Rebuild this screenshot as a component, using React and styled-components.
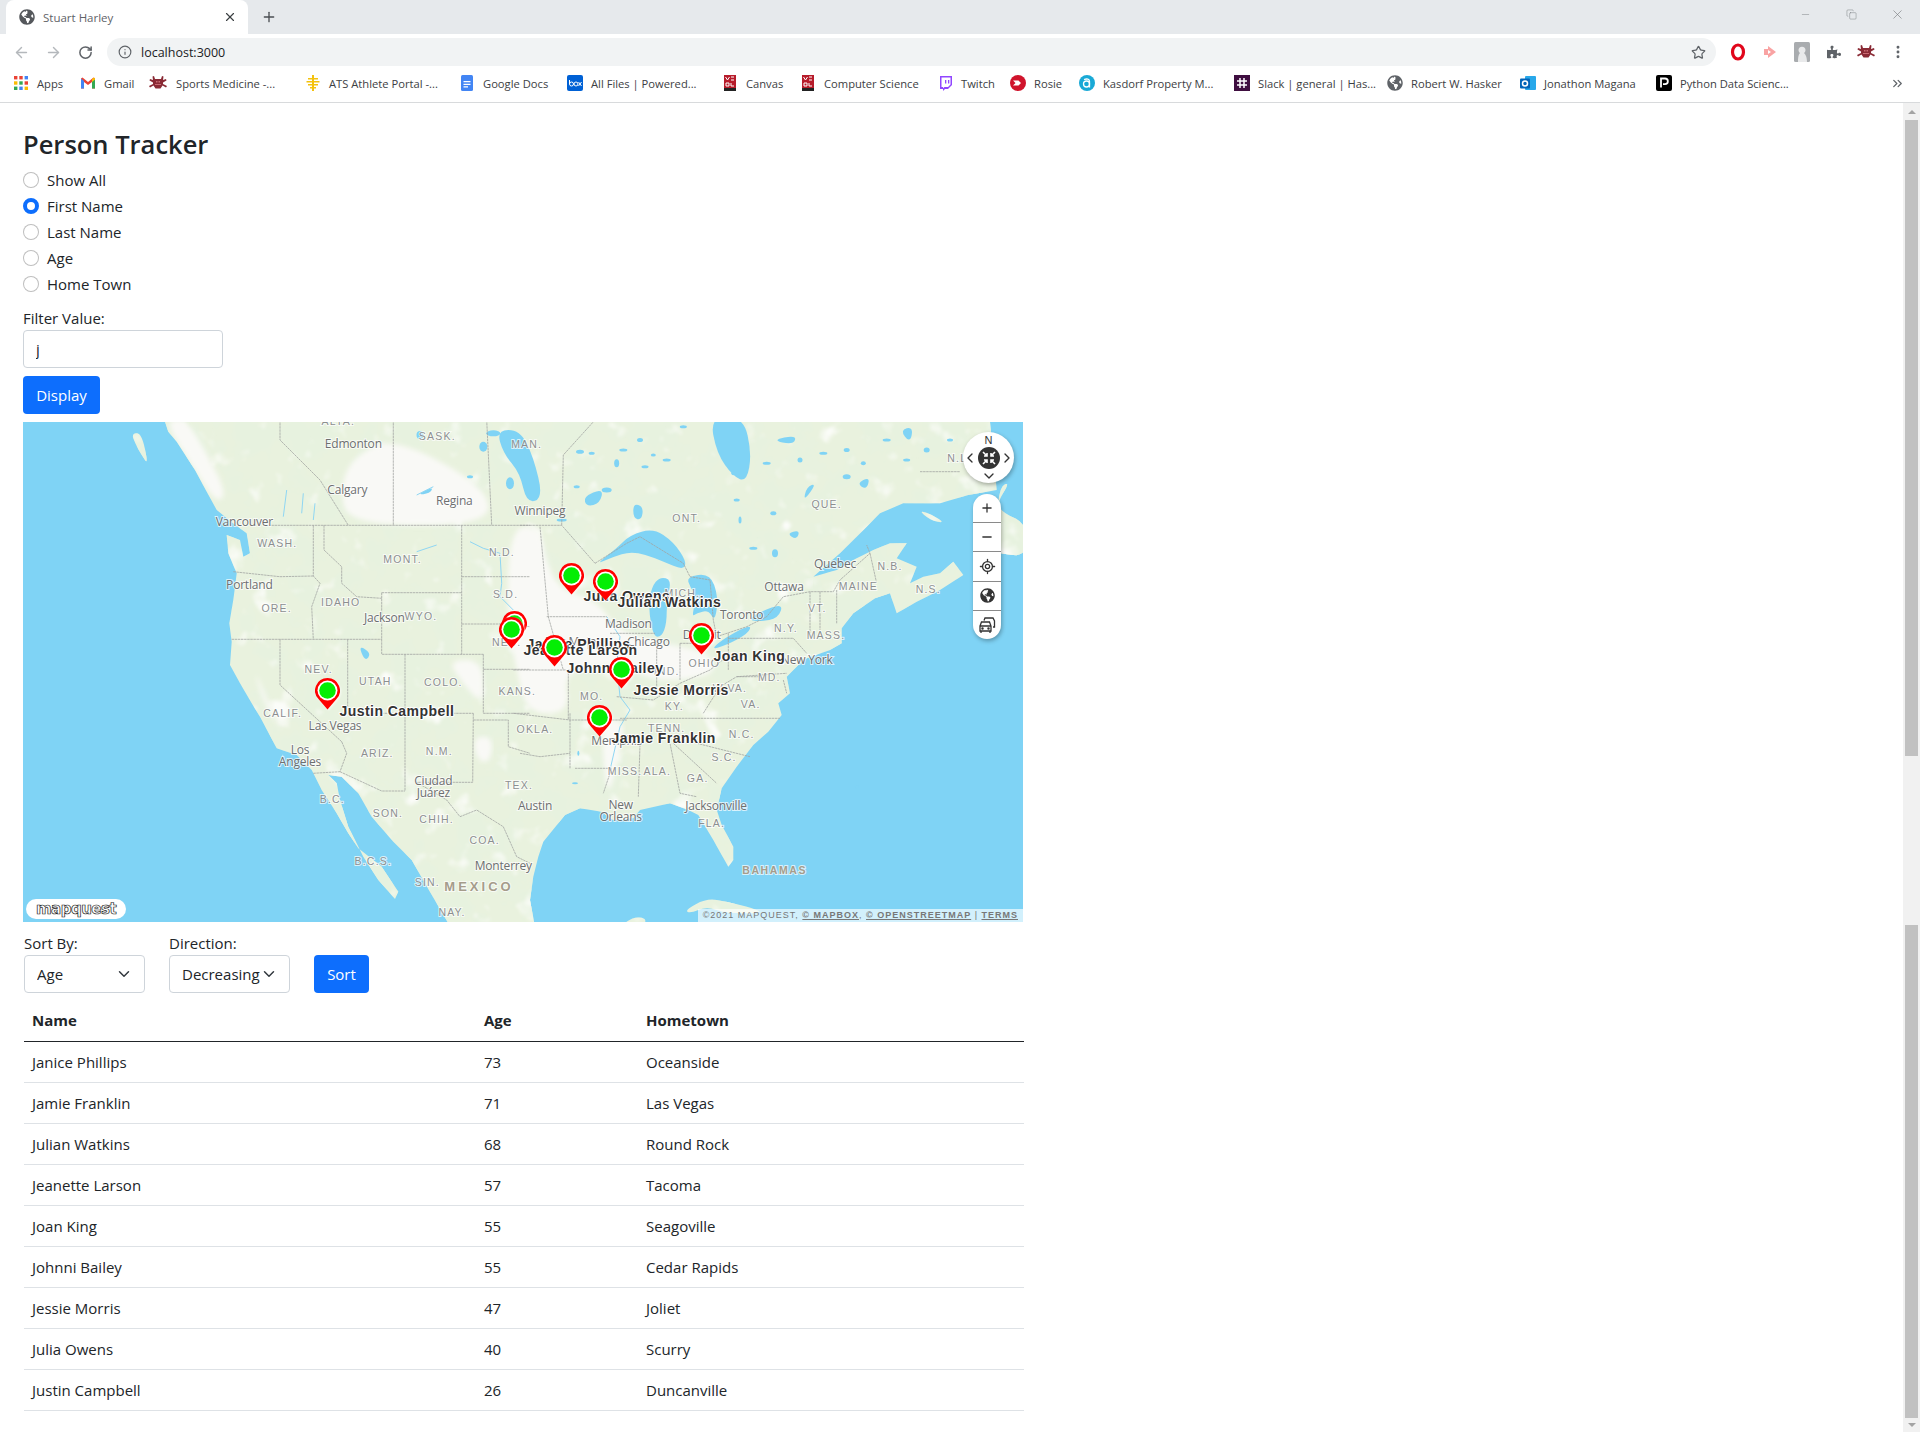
import React from 'react'
import styled, { createGlobalStyle } from 'styled-components'
import { ArrowLeft, ArrowRight, RotateCw, Info, Star, X, Plus, Minus, Copy, ChevronsRight, EllipsisVertical, ChevronLeft, ChevronRight, ChevronDown, LocateFixed } from 'lucide-react'
import { FaGlobeAmericas, FaPuzzlePiece } from 'react-icons/fa'

const UI_FONT = `"Open Sans", "Noto Sans", "Liberation Sans", sans-serif`

const GlobalStyle = createGlobalStyle`
  html, body { margin: 0; padding: 0; height: 1432px; overflow: hidden; background: #fff; }
  body { font-family: ${UI_FONT}; color: #212529; }
  * { box-sizing: border-box; }
`

const Shell = styled.div`
  width: 1920px;
  height: 1432px;
  display: flex;
  flex-direction: column;
  overflow: hidden;
`

/* browser chrome */
const TabStrip = styled.div`
  height: 34px;
  background: #e6e9ec;
  display: flex;
  align-items: flex-end;
  padding-left: 6px;
`
const Tab = styled.div`
  width: 242px;
  height: 34px;
  background: #fff;
  border-radius: 8px 8px 0 0;
  display: flex;
  align-items: center;
  padding-left: 13px;
  color: #5f6368;
  font-size: 11.5px;
`
const TabTitle = styled.span`
  margin-left: 8px;
  flex: 1;
`
const TabClose = styled.span`
  width: 16px;
  margin-right: 9px;
  display: flex;
  color: #3c4043;
`
const NewTab = styled.span`
  margin: 0 auto 9px 13px;
  display: flex;
  color: #4a4d51;
`
const WindowButton = styled.span`
  width: 46px;
  height: 34px;
  display: flex;
  align-items: center;
  justify-content: center;
  color: #75787c;
  padding-bottom: 6px;
`
const Toolbar = styled.div`
  height: 32px;
  background: #fff;
  display: flex;
  align-items: flex-end;
  padding-left: 5px;
`
const NavButton = styled.span`
  width: 32px;
  height: 28px;
  display: flex;
  align-items: center;
  justify-content: center;
  color: ${p => p.$color || '#5f6368'};
`
const Omnibox = styled.div`
  width: 1609px;
  height: 28px;
  margin: 0 6px;
  border-radius: 14px;
  background: #f1f3f4;
  display: flex;
  align-items: center;
  padding: 0 10px 0 11px;
  color: #5f6368;
`
const Address = styled.span`
  margin-left: 9px;
  flex: 1;
  font-size: 12.5px;
  color: #202124;
`
const BookmarkBar = styled.div`
  height: 37px;
  background: #fff;
  border-bottom: 1px solid #d8dadc;
  display: flex;
  align-items: center;
  padding: 0 0 2px 13px;
  position: relative;
`
const Bookmark = styled.div`
  width: ${p => p.$w}px;
  display: flex;
  align-items: center;
  gap: 8px;
  font-size: 11.2px;
  color: #3c4043;
  white-space: nowrap;
`
const MoreBookmarks = styled.span`
  position: absolute;
  right: 15px;
  top: 10px;
  display: flex;
  color: #5f6368;
`

/* page */
const Viewport = styled.div`
  flex: 1;
  display: flex;
  min-height: 0;
`
const Page = styled.main`
  flex: 1;
  padding: 24px 0 0 23px;
  line-height: 24px;
  font-size: 15px;
`
const Title = styled.h3`
  margin: 0 0 7px;
  font-size: 25.5px;
  line-height: 34px;
  font-weight: 600;
`
const RadioRow = styled.label`
  display: flex;
  align-items: center;
  gap: 8px;
  height: 24px;
  margin-bottom: 2px;
`
const RadioInput = styled.input`
  appearance: none;
  width: 16px;
  height: 16px;
  margin: 0;
  border-radius: 50%;
  background: #fff;
  border: 1px solid rgba(0, 0, 0, 0.25);
  &:checked {
    border: 4px solid #0d6efd;
  }
`
const FilterGroup = styled.div`
  margin-top: 10px;
  display: flex;
  flex-direction: column;
  align-items: flex-start;
`
const TextField = styled.input`
  width: 200px;
  height: 38px;
  padding: 6px 12px;
  border: 1px solid #ced4da;
  border-radius: 4px;
  color: #212529;
  font: 15px ${UI_FONT};
  outline: none;
`
const PrimaryButton = styled.button`
  height: 38px;
  width: ${p => p.$w}px;
  margin-top: ${p => p.$top || 0}px;
  border: 0;
  border-radius: 4px;
  background: #0d6efd;
  color: #fff;
  font: 15px ${UI_FONT};
  padding: 0;
`

const MapFrame = styled.section`
  position: relative;
  width: 1000px;
  height: 500px;
  margin-top: 8px;
  overflow: hidden;
  background: #7fd3f5;
`
const MapArt = styled.svg`
  display: block;
  width: 1000px;
  height: 500px;
`
const placeStyles = {
  city: { size: 12, spacing: -0.2, fill: '#6d6f70' },
  state: { size: 10.5, spacing: 1.2, fill: '#8c8f90' },
  country: { size: 13, spacing: 3, fill: '#a59c8b' },
  sea: { size: 10.5, spacing: 1.6, fill: '#a59c8b' },
}
const PlaceName = styled.text`
  font-family: ${p => (p.$kind === 'city' ? UI_FONT : '"Liberation Sans", sans-serif')};
  font-size: ${p => placeStyles[p.$kind].size}px;
  font-weight: ${p => (p.$kind === 'country' || p.$kind === 'sea' ? 700 : 400)};
  letter-spacing: ${p => placeStyles[p.$kind].spacing}px;
  fill: ${p => placeStyles[p.$kind].fill};
  text-anchor: middle;
  dominant-baseline: central;
  stroke: rgba(255, 255, 255, 0.7);
  stroke-width: 2px;
  paint-order: stroke;
`
const Pin = styled.div`
  position: absolute;
  left: ${p => p.$x - 12.5}px;
  top: ${p => p.$y - 12.5}px;
  width: 25px;
  height: 32px;
`
const PinArt = styled.svg`
  display: block;
  width: 25px;
  height: 32px;
  filter: drop-shadow(1px 1px 1px rgba(255, 255, 255, 0.7));
`
const PinLabel = styled.span`
  position: absolute;
  left: 25px;
  top: 24px;
  white-space: nowrap;
  font: bold 14px/18px "Liberation Sans", Arial, sans-serif;
  letter-spacing: 0.45px;
  color: #333;
  text-shadow: 1px 0 0 #fff, -1px 0 0 #fff, 0 1px 0 #fff, 0 -1px 0 #fff, 1px 1px 1px #fff, -1px -1px 1px #fff;
`
const Compass = styled.div`
  position: absolute;
  left: 940px;
  top: 10px;
  width: 51px;
  height: 51px;
  border-radius: 50%;
  background: #fff;
  box-shadow: 1px 2px 4px rgba(0, 0, 0, 0.3);
  display: grid;
  grid-template-columns: 14px 23px 14px;
  grid-template-rows: 14px 23px 14px;
  place-items: center;
  color: #333;
`
const CompassCell = styled.span`
  grid-column: ${p => p.$col};
  grid-row: ${p => p.$row};
  display: flex;
`
const CompassNorth = styled.span`
  grid-column: 2;
  grid-row: 1;
  font: 11px/12px "Liberation Sans", sans-serif;
  padding-top: 2px;
`
const CompassHub = styled.span`
  grid-column: 2;
  grid-row: 2;
  width: 22px;
  height: 22px;
  border-radius: 50%;
  background: #333;
  display: flex;
  align-items: center;
  justify-content: center;
`
const ZoomStack = styled.div`
  position: absolute;
  left: 950px;
  top: 72px;
  width: 28px;
  height: 145px;
  border-radius: 14px;
  background: #fff;
  box-shadow: 1px 2px 4px rgba(0, 0, 0, 0.3);
  display: flex;
  flex-direction: column;
  overflow: hidden;
  color: #333;
`
const ZoomButton = styled.span`
  flex: 1;
  display: flex;
  align-items: center;
  justify-content: center;
  & + & {
    border-top: 1px solid #8a8a8a;
  }
`
const LogoPill = styled.div`
  position: absolute;
  left: 3px;
  bottom: 3px;
  width: 100px;
  height: 20px;
  border-radius: 10px;
  background: #fff;
  display: flex;
  align-items: center;
  justify-content: center;
`
const LogoText = styled.span`
  font: bold 15px/20px "DejaVu Sans", sans-serif;
  letter-spacing: -0.5px;
  color: #fff;
  -webkit-text-stroke: 0.7px #222;
`
const Attribution = styled.div`
  position: absolute;
  right: 0;
  bottom: 0;
  height: 13px;
  width: 325px;
  padding-right: 5px;
  background: rgba(255, 255, 255, 0.65);
  color: #777;
  font: 9px/13px "Liberation Sans", sans-serif;
  letter-spacing: 1px;
  text-align: right;
  white-space: nowrap;
`
const AttrLink = styled.span`
  font-weight: 700;
  text-decoration: underline;
`

const SortBar = styled.div`
  display: flex;
  align-items: flex-end;
  gap: 24px;
  margin: 9px 0 7px 1px;
`
const SortField = styled.label`
  display: flex;
  flex-direction: column;
`
const Select = styled.select`
  appearance: none;
  width: 121px;
  height: 38px;
  padding: 0 0 0 12px;
  border: 1px solid #ced4da;
  border-radius: 4px;
  color: #212529;
  font: 15px ${UI_FONT};
  background: #fff url("data:image/svg+xml,%3csvg xmlns='http://www.w3.org/2000/svg' viewBox='0 0 16 16'%3e%3cpath fill='none' stroke='%23343a40' stroke-linecap='round' stroke-linejoin='round' stroke-width='2' d='M2 5l6 6 6-6'/%3e%3c/svg%3e") no-repeat right 12px center / 16px 12px;
`
const People = styled.table`
  width: 1000px;
  margin-left: 1px;
  border-collapse: collapse;
  table-layout: fixed;
`
const HeadCell = styled.th`
  width: ${p => p.$w}px;
  height: 41px;
  padding: 8px;
  text-align: left;
  font-weight: 700;
  border-bottom: 1px solid #212529;
`
const Cell = styled.td`
  height: 41px;
  padding: 8px;
  border-bottom: 1px solid #dee2e6;
`

const Scrollbar = styled.aside`
  width: 17px;
  background: #f1f1f1;
  display: flex;
  flex-direction: column;
`
const ScrollArrow = styled.span`
  height: ${p => p.$h}px;
  display: flex;
  align-items: center;
  justify-content: center;
  &::before {
    content: '';
    border-left: 4px solid transparent;
    border-right: 4px solid transparent;
    ${p => (p.$down ? 'border-top' : 'border-bottom')}: 4px solid #a3a3a3;
  }
`
const ScrollThumb = styled.span`
  height: ${p => p.$h}px;
  margin: ${p => (p.$last ? 'auto 2px 0 2px' : '0 2px')};
  background: #c1c1c1;
`

/* small favicons, drawn */
const Ico = styled.svg`
  width: 16px;
  height: 16px;
  flex: none;
`
const BugIco = styled.svg`
  width: 20px;
  height: 16px;
  flex: none;
`
const icons = {
  apps: (
    <Ico viewBox="0 0 16 16">
      {[['#ea4335', '#ea4335', '#4285f4'], ['#fbbc04', '#34a853', '#ea4335'], ['#34a853', '#4285f4', '#fbbc04']].map((row, r) =>
        row.map((c, i) => <rect key={`${r}${i}`} x={1 + i * 5.3} y={1 + r * 5.3} width="3.4" height="3.4" fill={c} />)
      )}
    </Ico>
  ),
  gmail: (
    <Ico viewBox="0 0 16 16">
      <path d="M1 3.500v10h3V7l4 3 4-3v6.500h3v-10l-1.500-1L8 7 2.500 2.500z" fill="#ea4335" />
      <path d="M1 3.500v10h3V6z" fill="#4285f4" />
      <path d="M15 3.500v10h-3V6z" fill="#34a853" />
      <path d="M15 3.500 14 2.500 12 4v3l3-2.500z" fill="#fbbc04" />
    </Ico>
  ),
  bug: (
    <BugIco viewBox="0 0 20 16">
      <path d="M7 4h6l1-3 1.500.500L15 5l3-1 .500 1.500L15 7.500V9l4 2-1 1.500-3.500-2L12.500 13.500h-5L5.500 10.500 2 12.500 1 11l4-2V7.500L1.500 5.500 2 4l3 1-.500-3.500L6 1z" fill="#8a2a35" />
      <path d="M8 6h1.500v1.500H8zM10.500 6H12v1.500h-1.500zM7 9h6v1H7z" fill="#c96a72" />
    </BugIco>
  ),
  ats: (
    <Ico viewBox="0 0 16 16">
      <path d="M7 0h2v16H7zM3 3h10v1.500H3zM1.500 6h13v1.500h-13zM3 9h10v1.500H3zM5 12h6v1.500H5z" fill="#f4c20d" />
    </Ico>
  ),
  docs: (
    <Ico viewBox="0 0 16 16">
      <rect x="2" width="12" height="16" rx="1.500" fill="#4285f4" />
      <path d="M4.500 6h7v1.300h-7zM4.500 8.700h7V10h-7zM4.500 11.300h4.500v1.300H4.500z" fill="#fff" />
    </Ico>
  ),
  box: (
    <Ico viewBox="0 0 16 16">
      <rect width="16" height="16" rx="2" fill="#0061d5" />
      <circle cx="4.500" cy="9" r="2" fill="none" stroke="#fff" />
      <circle cx="9" cy="9" r="2" fill="none" stroke="#fff" />
      <path d="M2.500 5v4M11.500 7l3 4M14.500 7l-3 4" stroke="#fff" fill="none" />
    </Ico>
  ),
  msoe: (
    <Ico viewBox="0 0 16 16">
      <rect x="2" width="12" height="13" fill="#b71c2b" />
      <path d="M3.500 2l2 3 2-3M9 2h3M9 5h3M4 8h3v3H4zM9 8v3h3" stroke="#fff" fill="none" />
      <rect x="2" y="13" width="12" height="3" fill="#222" />
    </Ico>
  ),
  twitch: (
    <Ico viewBox="0 0 16 16">
      <path d="M3 1h12v9l-4 4H8l-2 2v-2H3z" fill="#9146ff" />
      <path d="M4.500 2.500h9v7l-2.500 2.500H7.500l-1.500 1.300V12H4.500z" fill="#fff" />
      <path d="M8 5h1.300v3.500H8zM11 5h1.300v3.500H11z" fill="#9146ff" />
    </Ico>
  ),
  rosie: (
    <Ico viewBox="0 0 16 16">
      <circle cx="8" cy="8" r="8" fill="#d0142c" />
      <path d="M3 5.500h5.500L11 8l-2.500 2.500H3l2.500-2.500z" fill="#fff" />
    </Ico>
  ),
  kasdorf: (
    <Ico viewBox="0 0 16 16">
      <circle cx="8" cy="8" r="8" fill="#19a9d6" />
      <circle cx="7.500" cy="9" r="3" fill="none" stroke="#fff" strokeWidth="1.300" />
      <path d="M5 4.500c3-1 5.500-.5 5.500 2v6" fill="none" stroke="#fff" strokeWidth="1.300" />
    </Ico>
  ),
  slack: (
    <Ico viewBox="0 0 16 16">
      <rect width="16" height="16" fill="#3f0e40" />
      <path d="M6 3v10M10 3v10M3 6h10M3 10h10" stroke="#fff" strokeWidth="1.500" />
    </Ico>
  ),
  outlook: (
    <Ico viewBox="0 0 16 16">
      <rect x="5" y="1" width="11" height="14" rx="1" fill="#28a8ea" />
      <rect y="3.500" width="10" height="10" rx="1" fill="#0364b8" />
      <circle cx="5" cy="8.500" r="2.500" fill="none" stroke="#fff" strokeWidth="1.500" />
    </Ico>
  ),
  python: (
    <Ico viewBox="0 0 16 16">
      <rect width="16" height="16" rx="2" fill="#000" />
      <path d="M5 12.500v-9h4a2.800 2.800 0 0 1 0 5.700H7" fill="none" stroke="#fff" strokeWidth="1.800" />
    </Ico>
  ),
  globe: <FaGlobeAmericas size={16} color="#5f6368" />,
}

const bookmarks = [
  ['apps', 'Apps', 67],
  ['gmail', 'Gmail', 68],
  ['bug', 'Sports Medicine -...', 157],
  ['ats', 'ATS Athlete Portal -...', 154],
  ['docs', 'Google Docs', 108],
  ['box', 'All Files | Powered...', 155],
  ['msoe', 'Canvas', 78],
  ['msoe', 'Computer Science', 137],
  ['twitch', 'Twitch', 73],
  ['rosie', 'Rosie', 69],
  ['kasdorf', 'Kasdorf Property M...', 155],
  ['slack', 'Slack | general | Has...', 153],
  ['globe', 'Robert W. Hasker', 133],
  ['outlook', 'Jonathon Magana', 136],
  ['python', 'Python Data Scienc...', 150],
]

/* map geometry is written in crop coordinates: west half and east half */
const west = pts => pts.map(([x, y]) => [x / 3 - 3, y / 3 - 2])
const east = pts => pts.map(([x, y]) => [x / 3 + 497, y / 3 - 2])
const toPath = (pts, close = true) =>
  'M' + pts.map(([x, y]) => `${x.toFixed(1)} ${y.toFixed(1)}`).join('L') + (close ? 'Z' : '')
// rounded outline through the midpoints, so coasts and lakes don't look cut with scissors
const toBlob = pts => {
  const mid = (a, b) => [(a[0] + b[0]) / 2, (a[1] + b[1]) / 2]
  const start = mid(pts[pts.length - 1], pts[0])
  let d = `M${start[0].toFixed(1)} ${start[1].toFixed(1)}`
  pts.forEach((p, i) => {
    const m = mid(p, pts[(i + 1) % pts.length])
    d += `Q${p[0].toFixed(1)} ${p[1].toFixed(1)} ${m[0].toFixed(1)} ${m[1].toFixed(1)}`
  })
  return d + 'Z'
}

const mainland = [
  ...west([[430, -10], [445, 35], [470, 65], [525, 150], [560, 215], [590, 270], [640, 310], [680, 340], [690, 400], [670, 410], [660, 360], [620, 345], [625, 400], [650, 460], [640, 540], [628, 610], [635, 665], [630, 735], [660, 790], [695, 850], [720, 890], [770, 985], [830, 1005], [875, 1050], [905, 1110], [950, 1180], [985, 1240], [1015, 1285], [1085, 1340], [1135, 1415], [1125, 1437], [1075, 1380], [1030, 1310], [985, 1220], [960, 1140], [950, 1090], [925, 1065], [965, 1070], [1015, 1120], [1055, 1190], [1120, 1265], [1175, 1320], [1215, 1390], [1285, 1510]]),
  ...east([[45, 1520], [30, 1440], [40, 1370], [55, 1310], [70, 1265], [135, 1185], [180, 1165], [245, 1175], [280, 1200], [340, 1195], [360, 1170], [450, 1150], [505, 1170], [535, 1185], [580, 1260], [625, 1340], [640, 1320], [640, 1280], [605, 1215], [590, 1170], [605, 1105], [650, 1040], [700, 975], [745, 935], [785, 885], [775, 850], [810, 820], [800, 770], [840, 730], [860, 715], [930, 690], [965, 670], [965, 625], [1000, 580], [1065, 535], [1110, 520], [1130, 580], [1190, 545], [1260, 510], [1330, 465], [1300, 425], [1260, 460], [1210, 470], [1170, 490], [1190, 440], [1130, 415], [1160, 370], [1110, 370], [1060, 390], [1000, 420], [950, 450], [880, 470], [960, 400], [1010, 350], [1080, 280], [1150, 250], [1260, 250], [1345, 225], [1430, 210], [1410, 5], [1410, -30]]),
  ...west([[430, -30]]),
]
const islands = [
  west([[335, 40], [365, 40], [385, 135], [365, 105], [345, 70]]),
  east([[1470, 186], [1430, 250], [1450, 280], [1520, 310], [1520, 410], [1440, 400], [1390, 390], [1360, 380], [1430, 290], [1440, 200]]),
  east([[1195, 270], [1240, 285], [1275, 310], [1230, 300]]),
  east([[495, 1470], [560, 1435], [620, 1445], [700, 1465], [730, 1480], [620, 1480], [560, 1460], [510, 1480]]),
  east([[300, 1520], [340, 1490], [380, 1495], [370, 1520]]),
]
const lakes = [
  east([[225, 435], [290, 385], [330, 345], [400, 325], [460, 365], [500, 425], [490, 450], [430, 425], [380, 405], [330, 395], [280, 410]]),
  east([[400, 650], [385, 560], [395, 500], [420, 470], [455, 480], [440, 540], [440, 610], [425, 650]]),
  east([[500, 470], [570, 460], [595, 530], [585, 605], [565, 570], [530, 580], [515, 590], [530, 530], [510, 500]]),
  east([[570, 690], [620, 650], [695, 612], [685, 640], [620, 675]]),
  east([[685, 600], [720, 575], [790, 550], [775, 595], [720, 605]]),
  east([[570, -10], [670, -10], [695, 100], [680, 185], [640, 170], [590, 100]]),
  east([[-70, 30], [0, 30], [40, 110], [70, 235], [20, 250], [0, 160], [-50, 100]]),
  east([[190, 230], [250, 205], [240, 250], [200, 260]]),
  east([[340, 250], [370, 260], [365, 300], [340, 295]]),
  east([[850, 245], [890, 190], [860, 200]]),
  east([[800, 340], [840, 330], [830, 360]]),
  east([[1010, 190], [1050, 170], [1040, 210]]),
  east([[755, 60], [830, 45], [820, 75]]),
  east([[1140, 30], [1180, 20], [1170, 70]]),
  west([[1015, 675], [1055, 700], [1035, 725]]),
  west([[1190, 225], [1240, 200], [1230, 220]]),
]
// [x, y, rx, ry] small lakes, all in the east crop's coordinates
const ponds = [
  [180, 95, 8, 4], [215, 100, 6, 3], [260, 210, 10, 5], [290, 130, 5, 8], [310, 90, 8, 3], [375, 140, 7, 3], [440, 120, 8, 3],
  [400, 105, 5, 3], [740, 130, 8, 3], [760, 280, 6, 4], [765, 400, 6, 8], [700, 385, 8, 3], [980, 170, 8, 5], [1030, 130, 5, 4],
  [980, 90, 6, 4], [910, 100, 8, 3], [650, 240, 6, 3], [640, 160, 4, 4], [660, 300, 3, 7], [170, 200, 6, 3], [125, 300, 10, 3],
  [1160, 120, 7, 3], [1220, 90, 6, 5], [1100, 60, 8, 3], [1290, 60, 6, 3], [490, 20, 7, 3], [360, 60, 6, 4], [840, 120, 5, 5],
  [-30, 190, 8, 12], [-80, 40, 14, 6], [-110, 80, 8, 10], [-300, 45, 7, 8], [-150, 170, 6, 3],
  [1010, 1100, 4, 3], [175, 1000, 2, 5], [165, 1090, 6, 2],
]
const lightAreas = [
  east([[-30, 320], [60, 320], [80, 430], [120, 510], [230, 540], [300, 640], [480, 680], [570, 700], [590, 760], [480, 780], [400, 780], [290, 730], [130, 750], [150, 880], [20, 880], [-10, 750], [-40, 600]]),
  east([[245, 900], [320, 900], [290, 1040], [265, 1130], [250, 1030]]),
  east([[850, 490], [880, 470], [870, 510]]),
  west([[1000, 110], [1120, 50], [1400, 200], [1410, 316], [985, 316], [960, 200]]),
  west([[430, 0], [500, 0], [560, 100], [620, 220], [590, 250], [525, 150]]),
  west([[700, 740], [730, 850], [800, 950], [750, 860]]),
  west([[1285, 720], [1390, 720], [1390, 860], [1320, 780]]),
  west([[1360, 950], [1420, 950], [1410, 1030], [1370, 1020]]),
]
const rivers = [
  east([[260, 590], [300, 650], [290, 730], [300, 830], [330, 870], [300, 920], [270, 1050]]),
  west([[1350, 365], [1390, 385], [1440, 400], [1445, 490], [1440, 530], [1480, 570]]),
  west([[1190, 395], [1250, 375]]),
  west([[850, 220], [845, 280]]),
  west([[800, 210], [790, 290]]),
  west([[885, 250], [880, 300]]),
  west([[1190, 225], [1240, 200]]),
]
const borders = [
  west([[745, 316], [1530, 316]]), east([[0, 316], [125, 316], [225, 430]]),
  west([[780, 0], [780, 60], [900, 180], [975, 300], [985, 316]]), west([[1120, 0], [1120, 316]]), west([[1400, 0], [1415, 316]]),
  east([[225, 0], [130, 105], [125, 316]]),
  east([[225, 430], [320, 370], [360, 350], [490, 430], [510, 470], [570, 480], [580, 600], [590, 650], [680, 620], [740, 590], [790, 530], [870, 515], [940, 515], [960, 480], [1050, 400], [1040, 375]]),
  west([[640, 455], [780, 470], [880, 468]]), west([[880, 316], [880, 468], [900, 490], [875, 560], [880, 658]]),
  west([[635, 658], [1085, 658]]), west([[912, 316], [912, 390], [965, 440], [965, 490], [1010, 530], [1085, 535]]),
  west([[1085, 518], [1325, 518]]), west([[1085, 518], [1085, 703], [1390, 703]]), west([[1325, 316], [1325, 703]]),
  west([[1325, 470], [1530, 470]]), west([[1325, 612], [1450, 612], [1530, 620]]),
  west([[780, 658], [780, 795], [965, 965]]), west([[983, 658], [983, 880]]), west([[983, 880], [1360, 880]]),
  west([[1155, 703], [1155, 1113]]), west([[1390, 703], [1390, 880], [1530, 880]]), west([[1390, 748], [1530, 748]]),
  west([[1360, 900], [1465, 900], [1465, 980], [1530, 1000]]), west([[1360, 880], [1358, 1087], [1190, 1087]]),
  west([[965, 965], [980, 1000], [960, 1055]]), west([[960, 1055], [1085, 1113], [1155, 1113]]), west([[880, 1060], [960, 1055]]),
  west([[1190, 1087], [1280, 1140], [1320, 1190], [1370, 1170], [1450, 1220], [1490, 1310], [1530, 1330]]),
  east([[0, 1000], [60, 1010], [150, 1000]]), east([[150, 880], [150, 1045]]), east([[165, 1045], [275, 1045], [250, 1120]]),
  east([[-20, 880], [150, 900], [320, 900]]), east([[300, 895], [780, 895]]), east([[145, 750], [145, 900]]),
  east([[130, 750], [290, 740]]), east([[80, 590], [260, 590]]), east([[60, 320], [85, 590], [130, 750]]),
  east([[-20, 750], [130, 750]]), east([[270, 640], [405, 640]]), east([[410, 660], [410, 800]]), east([[480, 670], [480, 780]]),
  east([[480, 670], [570, 670]]), east([[290, 830], [400, 840], [480, 790], [570, 750], [620, 710]]), east([[625, 640], [625, 750]]),
  east([[625, 655], [820, 655], [860, 700]]), east([[870, 515], [870, 640]]), east([[900, 515], [900, 630]]), east([[950, 510], [950, 610]]),
  east([[360, 975], [355, 1130]]), east([[450, 970], [480, 1120], [530, 1130]]), east([[460, 970], [590, 1090]]),
  east([[530, 970], [690, 1010]]), east([[550, 880], [600, 800], [650, 770], [720, 770]]), east([[650, 770], [800, 760]]),
  east([[790, 780], [800, 820]]), east([[1200, 155], [1320, 155]]), east([[1050, 400], [1070, 490]]),
]

const W = (name, x, y, kind) => [name, x / 3 - 3, y / 3 - 2, kind]
const E = (name, x, y, kind) => [name, x / 3 + 497, y / 3 - 2, kind]
const places = [
  W('ALTA.', 955, 4, 'state'), W('Edmonton', 1000, 70, 'city'), W('SASK.', 1252, 48, 'state'), W('Calgary', 982, 208, 'city'),
  W('Regina', 1303, 241, 'city'), W('Vancouver', 673, 303, 'city'), W('WASH.', 772, 368, 'state'), W('MONT.', 1148, 416, 'state'),
  W('N.D.', 1446, 397, 'state'), W('Portland', 688, 492, 'city'), W('S.D.', 1457, 523, 'state'), W('ORE.', 770, 565, 'state'),
  W('IDAHO', 962, 547, 'state'), W('Jackson', 1093, 591, 'city'), W('WYO.', 1203, 588, 'state'), W('NEB.', 1460, 665, 'state'),
  W('NEV.', 896, 747, 'state'), W('UTAH', 1066, 782, 'state'), W('COLO.', 1270, 786, 'state'), W('KANS.', 1492, 814, 'state'),
  W('CALIF.', 788, 878, 'state'), W('Las Vegas', 945, 917, 'city'), W('ARIZ.', 1072, 998, 'state'), W('N.M.', 1258, 992, 'state'),
  W('Los', 840, 987, 'city'), W('Angeles', 840, 1023, 'city'), W('Ciudad', 1240, 1080, 'city'), W('Juárez', 1240, 1117, 'city'),
  W('TEX.', 1497, 1096, 'state'), W('B.C.', 937, 1136, 'state'), W('SON.', 1104, 1178, 'state'), W('CHIH.', 1250, 1197, 'state'),
  W('COA.', 1394, 1260, 'state'), W('B.C.S.', 1060, 1322, 'state'), W('Monterrey', 1450, 1335, 'city'), W('SIN.', 1222, 1386, 'state'),
  W('MEXICO', 1377, 1400, 'country'), W('NAY.', 1296, 1476, 'state'),
  E('MAN.', 20, 73, 'state'), E('OKLA.', 45, 927, 'state'), E('Winnipeg', 60, 272, 'city'), E('ONT.', 500, 293, 'state'),
  E('QUE.', 920, 251, 'state'), E('N.L.', 1318, 115, 'state'), E('Quebec', 945, 430, 'city'), E('Ottawa', 792, 498, 'city'),
  E('N.B.', 1110, 438, 'state'), E('MAINE', 1015, 498, 'state'), E('N.S.', 1225, 508, 'state'), E('MICH.', 487, 519, 'state'),
  E('Toronto', 665, 582, 'city'), E('Madison', 325, 609, 'city'), E('N.Y.', 798, 624, 'state'), E('VT.', 892, 563, 'state'),
  E('MASS.', 918, 644, 'state'), E('Chicago', 385, 665, 'city'), E('Des Moines', 170, 665, 'city'), E('Detroit', 545, 642, 'city'),
  E('OHIO', 553, 730, 'state'), E('New York', 860, 717, 'city'), E('IND.', 440, 753, 'state'), E('MD.', 748, 772, 'state'),
  E('W.VA.', 630, 805, 'state'), E('VA.', 692, 852, 'state'), E('MO.', 215, 829, 'state'), E('KY.', 463, 858, 'state'),
  E('TENN.', 440, 923, 'state'), E('N.C.', 665, 942, 'state'), E('Memphis', 290, 960, 'city'), E('S.C.', 612, 1010, 'state'),
  E('MISS.', 315, 1052, 'state'), E('ALA.', 412, 1054, 'state'), E('GA.', 533, 1075, 'state'), E('Austin', 45, 1157, 'city'),
  E('New', 302, 1152, 'city'), E('Orleans', 302, 1188, 'city'), E('Jacksonville', 588, 1155, 'city'), E('FLA.', 575, 1208, 'state'),
  E('BAHAMAS', 764, 1351, 'sea'),
]

const pins = [
  ['Justin Campbell', 304, 268.7],
  ['Julia Owens', 548, 153],
  ['Julian Watkins', 582, 159],
  ['Janice Phillips', 491, 201.3],
  ['Jeanette Larson', 488, 207.3],
  ['Johnni Bailey', 531, 225],
  ['Jessie Morris', 598, 247],
  ['Joan King', 678, 213],
  ['Jamie Franklin', 576, 295.7],
]

const MapDrawing = () => (
  <MapArt viewBox="0 0 1000 500">
    <defs>
      <clipPath id="land-clip">
        <path d={toPath(mainland)} />
        {islands.map((p, i) => <path key={i} d={toBlob(p)} />)}
      </clipPath>
      <filter id="terrain" x="0" y="0" width="100%" height="100%">
        <feTurbulence type="fractalNoise" baseFrequency="0.03" numOctaves="4" seed="7" />
        <feColorMatrix values="0 0 0 0 0.80  0 0 0 0 0.89  0 0 0 0 0.74  4 4 0 0 -3.700" />
      </filter>
      <filter id="snow" x="0" y="0" width="100%" height="100%">
        <feTurbulence type="fractalNoise" baseFrequency="0.04" numOctaves="3" seed="21" />
        <feColorMatrix values="0 0 0 0 0.97  0 0 0 0 0.98  0 0 0 0 0.95  3 3 0 0 -3.500" />
        <feGaussianBlur stdDeviation="1.200" />
      </filter>
      <filter id="soft"><feGaussianBlur stdDeviation="2.500" /></filter>
    </defs>
    <g clipPath="url(#land-clip)">
      <rect width="1000" height="500" fill="#e9f2de" />
      <rect width="1000" height="500" filter="url(#terrain)" />
      <rect width="1000" height="500" filter="url(#snow)" />
      {lightAreas.map((p, i) => <path key={i} d={toBlob(p)} fill="#f9f9f6" filter="url(#soft)" />)}
    </g>
    {lakes.map((p, i) => <path key={i} d={toBlob(p)} fill="#7fd3f5" />)}
    {ponds.map(([x, y, rx, ry], i) => <ellipse key={i} cx={x / 3 + 497} cy={y / 3 - 2} rx={rx / 2} ry={ry / 2} fill="#7fd3f5" />)}
    {rivers.map((p, i) => <path key={i} d={toPath(p, false)} fill="none" stroke="#8fd6f3" strokeWidth="1" />)}
    {borders.map((p, i) => <path key={i} d={toPath(p, false)} fill="none" stroke="#a2a5a2" strokeWidth="0.8" strokeDasharray="2.500 0.6" />)}
    {places.map(([name, x, y, kind]) => (
      <PlaceName key={name} x={x} y={y} $kind={kind}>{name}</PlaceName>
    ))}
  </MapArt>
)

const MapPin = ({ name, x, y }) => (
  <Pin $x={x} $y={y}>
    <PinArt viewBox="0 0 25 32">
      <path d="M12.500 0a12.500 12.500 0 0 1 8.800 21.300L12.500 31.500 3.700 21.300A12.500 12.500 0 0 1 12.500 0z" fill="#f00" />
      <circle cx="12.500" cy="12.500" r="10" fill="#fff" />
      <circle cx="12.500" cy="12.500" r="8.300" fill="#04ee04" />
    </PinArt>
    <PinLabel>{name}</PinLabel>
  </Pin>
)

const people = [
  ['Janice Phillips', 73, 'Oceanside'],
  ['Jamie Franklin', 71, 'Las Vegas'],
  ['Julian Watkins', 68, 'Round Rock'],
  ['Jeanette Larson', 57, 'Tacoma'],
  ['Joan King', 55, 'Seagoville'],
  ['Johnni Bailey', 55, 'Cedar Rapids'],
  ['Jessie Morris', 47, 'Joliet'],
  ['Julia Owens', 40, 'Scurry'],
  ['Justin Campbell', 26, 'Duncanville'],
]

export default function App() {
  return (
    <Shell>
      <GlobalStyle />
      <TabStrip>
        <Tab>
          <FaGlobeAmericas size={16} color="#55585c" />
          <TabTitle>Stuart Harley</TabTitle>
          <TabClose><X size={14} strokeWidth={2} /></TabClose>
        </Tab>
        <NewTab><Plus size={16} strokeWidth={2} /></NewTab>
        <WindowButton><Minus size={11} strokeWidth={1} /></WindowButton>
        <WindowButton><Copy size={11} strokeWidth={1} /></WindowButton>
        <WindowButton><X size={15} strokeWidth={1} /></WindowButton>
      </TabStrip>
      <Toolbar>
        <NavButton $color="#b4b8bc"><ArrowLeft size={17} /></NavButton>
        <NavButton $color="#b4b8bc"><ArrowRight size={17} /></NavButton>
        <NavButton><RotateCw size={15} strokeWidth={2.4} /></NavButton>
        <Omnibox>
          <Info size={14} />
          <Address>localhost:3000</Address>
          <Star size={15} />
        </Omnibox>
        <NavButton>
          <svg width="16" height="18" viewBox="0 0 16 18"><ellipse cx="8" cy="9" rx="5.500" ry="7" fill="none" stroke="#e1061b" strokeWidth="3.200" /></svg>
        </NavButton>
        <NavButton>
          <svg width="16" height="16" viewBox="0 0 16 16"><path d="M2 5h4V2l8 6-8 6v-3H2z" fill="#f9a3a3" /><path d="M6 6v4l3-2z" fill="#fff" /></svg>
        </NavButton>
        <NavButton>
          <svg width="16" height="20" viewBox="0 0 16 20"><rect width="16" height="20" rx="1.500" fill="#a9acaf" /><path d="M4 20c0-6 1-8 2-9a3.500 3.500 0 1 1 4 0c1 1 3 3 3 9z" fill="#e9eaeb" /></svg>
        </NavButton>
        <NavButton><FaPuzzlePiece size={14} color="#5f6368" /></NavButton>
        <NavButton>{icons.bug}</NavButton>
        <NavButton><EllipsisVertical size={16} strokeWidth={2.4} /></NavButton>
      </Toolbar>
      <BookmarkBar>
        {bookmarks.map(([icon, label, w]) => (
          <Bookmark key={label} $w={w}>{icons[icon]}<span>{label}</span></Bookmark>
        ))}
        <MoreBookmarks><ChevronsRight size={15} /></MoreBookmarks>
      </BookmarkBar>
      <Viewport>
        <Page>
          <Title>Person Tracker</Title>
          {['Show All', 'First Name', 'Last Name', 'Age', 'Home Town'].map(option => (
            <RadioRow key={option}>
              <RadioInput type="radio" name="filter" defaultChecked={option === 'First Name'} />
              {option}
            </RadioRow>
          ))}
          <FilterGroup>
            <label>Filter Value:</label>
            <TextField defaultValue="j" />
            <PrimaryButton $w={77} $top={8}>Display</PrimaryButton>
          </FilterGroup>
          <MapFrame>
            <MapDrawing />
            {pins.map(([name, x, y]) => <MapPin key={name} name={name} x={x} y={y} />)}
            <Compass>
              <CompassNorth>N</CompassNorth>
              <CompassCell $col={1} $row={2}><ChevronLeft size={16} /></CompassCell>
              <CompassHub>
                <svg width="14" height="14" viewBox="0 0 14 14" fill="none" stroke="#fff" strokeWidth="1.600">
                  <path d="M1 1l4 4M5 2v3H2M13 1L9 5M9 2v3h3M1 13l4-4M5 12V9H2M13 13L9 9M9 12V9h3" />
                </svg>
              </CompassHub>
              <CompassCell $col={3} $row={2}><ChevronRight size={16} /></CompassCell>
              <CompassCell $col={2} $row={3}><ChevronDown size={16} /></CompassCell>
            </Compass>
            <ZoomStack>
              <ZoomButton><Plus size={14} strokeWidth={2.2} /></ZoomButton>
              <ZoomButton><Minus size={14} strokeWidth={2.6} /></ZoomButton>
              <ZoomButton><LocateFixed size={17} strokeWidth={1.8} /></ZoomButton>
              <ZoomButton><FaGlobeAmericas size={15} /></ZoomButton>
              <ZoomButton>
                <svg width="18" height="18" viewBox="0 0 18 18" fill="none" stroke="#333" strokeWidth="1.300">
                  <path d="M6 4.500 7 2h8l1.500 3v6H15" />
                  <path d="M2 10l1.500-4h8L13 10v5H2zM2 10h11M3 15v2M12 15v2" />
                  <circle cx="4.500" cy="12.500" r=".6" />
                  <circle cx="10.500" cy="12.500" r=".6" />
                </svg>
              </ZoomButton>
            </ZoomStack>
            <LogoPill><LogoText>mapquest</LogoText></LogoPill>
            <Attribution>©2021 MAPQUEST, <AttrLink>© MAPBOX</AttrLink>, <AttrLink>© OPENSTREETMAP</AttrLink> | <AttrLink>TERMS</AttrLink></Attribution>
          </MapFrame>
          <SortBar>
            <SortField>
              Sort By:
              <Select defaultValue="Age">
                <option>Name</option>
                <option>Age</option>
                <option>Hometown</option>
              </Select>
            </SortField>
            <SortField>
              Direction:
              <Select defaultValue="Decreasing">
                <option>Increasing</option>
                <option>Decreasing</option>
              </Select>
            </SortField>
            <PrimaryButton $w={55}>Sort</PrimaryButton>
          </SortBar>
          <People>
            <thead>
              <tr>
                <HeadCell $w={452}>Name</HeadCell>
                <HeadCell $w={162}>Age</HeadCell>
                <HeadCell $w={386}>Hometown</HeadCell>
              </tr>
            </thead>
            <tbody>
              {people.map(([name, age, town]) => (
                <tr key={name}>
                  <Cell>{name}</Cell>
                  <Cell>{age}</Cell>
                  <Cell>{town}</Cell>
                </tr>
              ))}
            </tbody>
          </People>
        </Page>
        <Scrollbar>
          <ScrollArrow $h={17} />
          <ScrollThumb $h={636} />
          <ScrollThumb $h={493} $last />
          <ScrollArrow $h={14} $down />
        </Scrollbar>
      </Viewport>
    </Shell>
  )
}
